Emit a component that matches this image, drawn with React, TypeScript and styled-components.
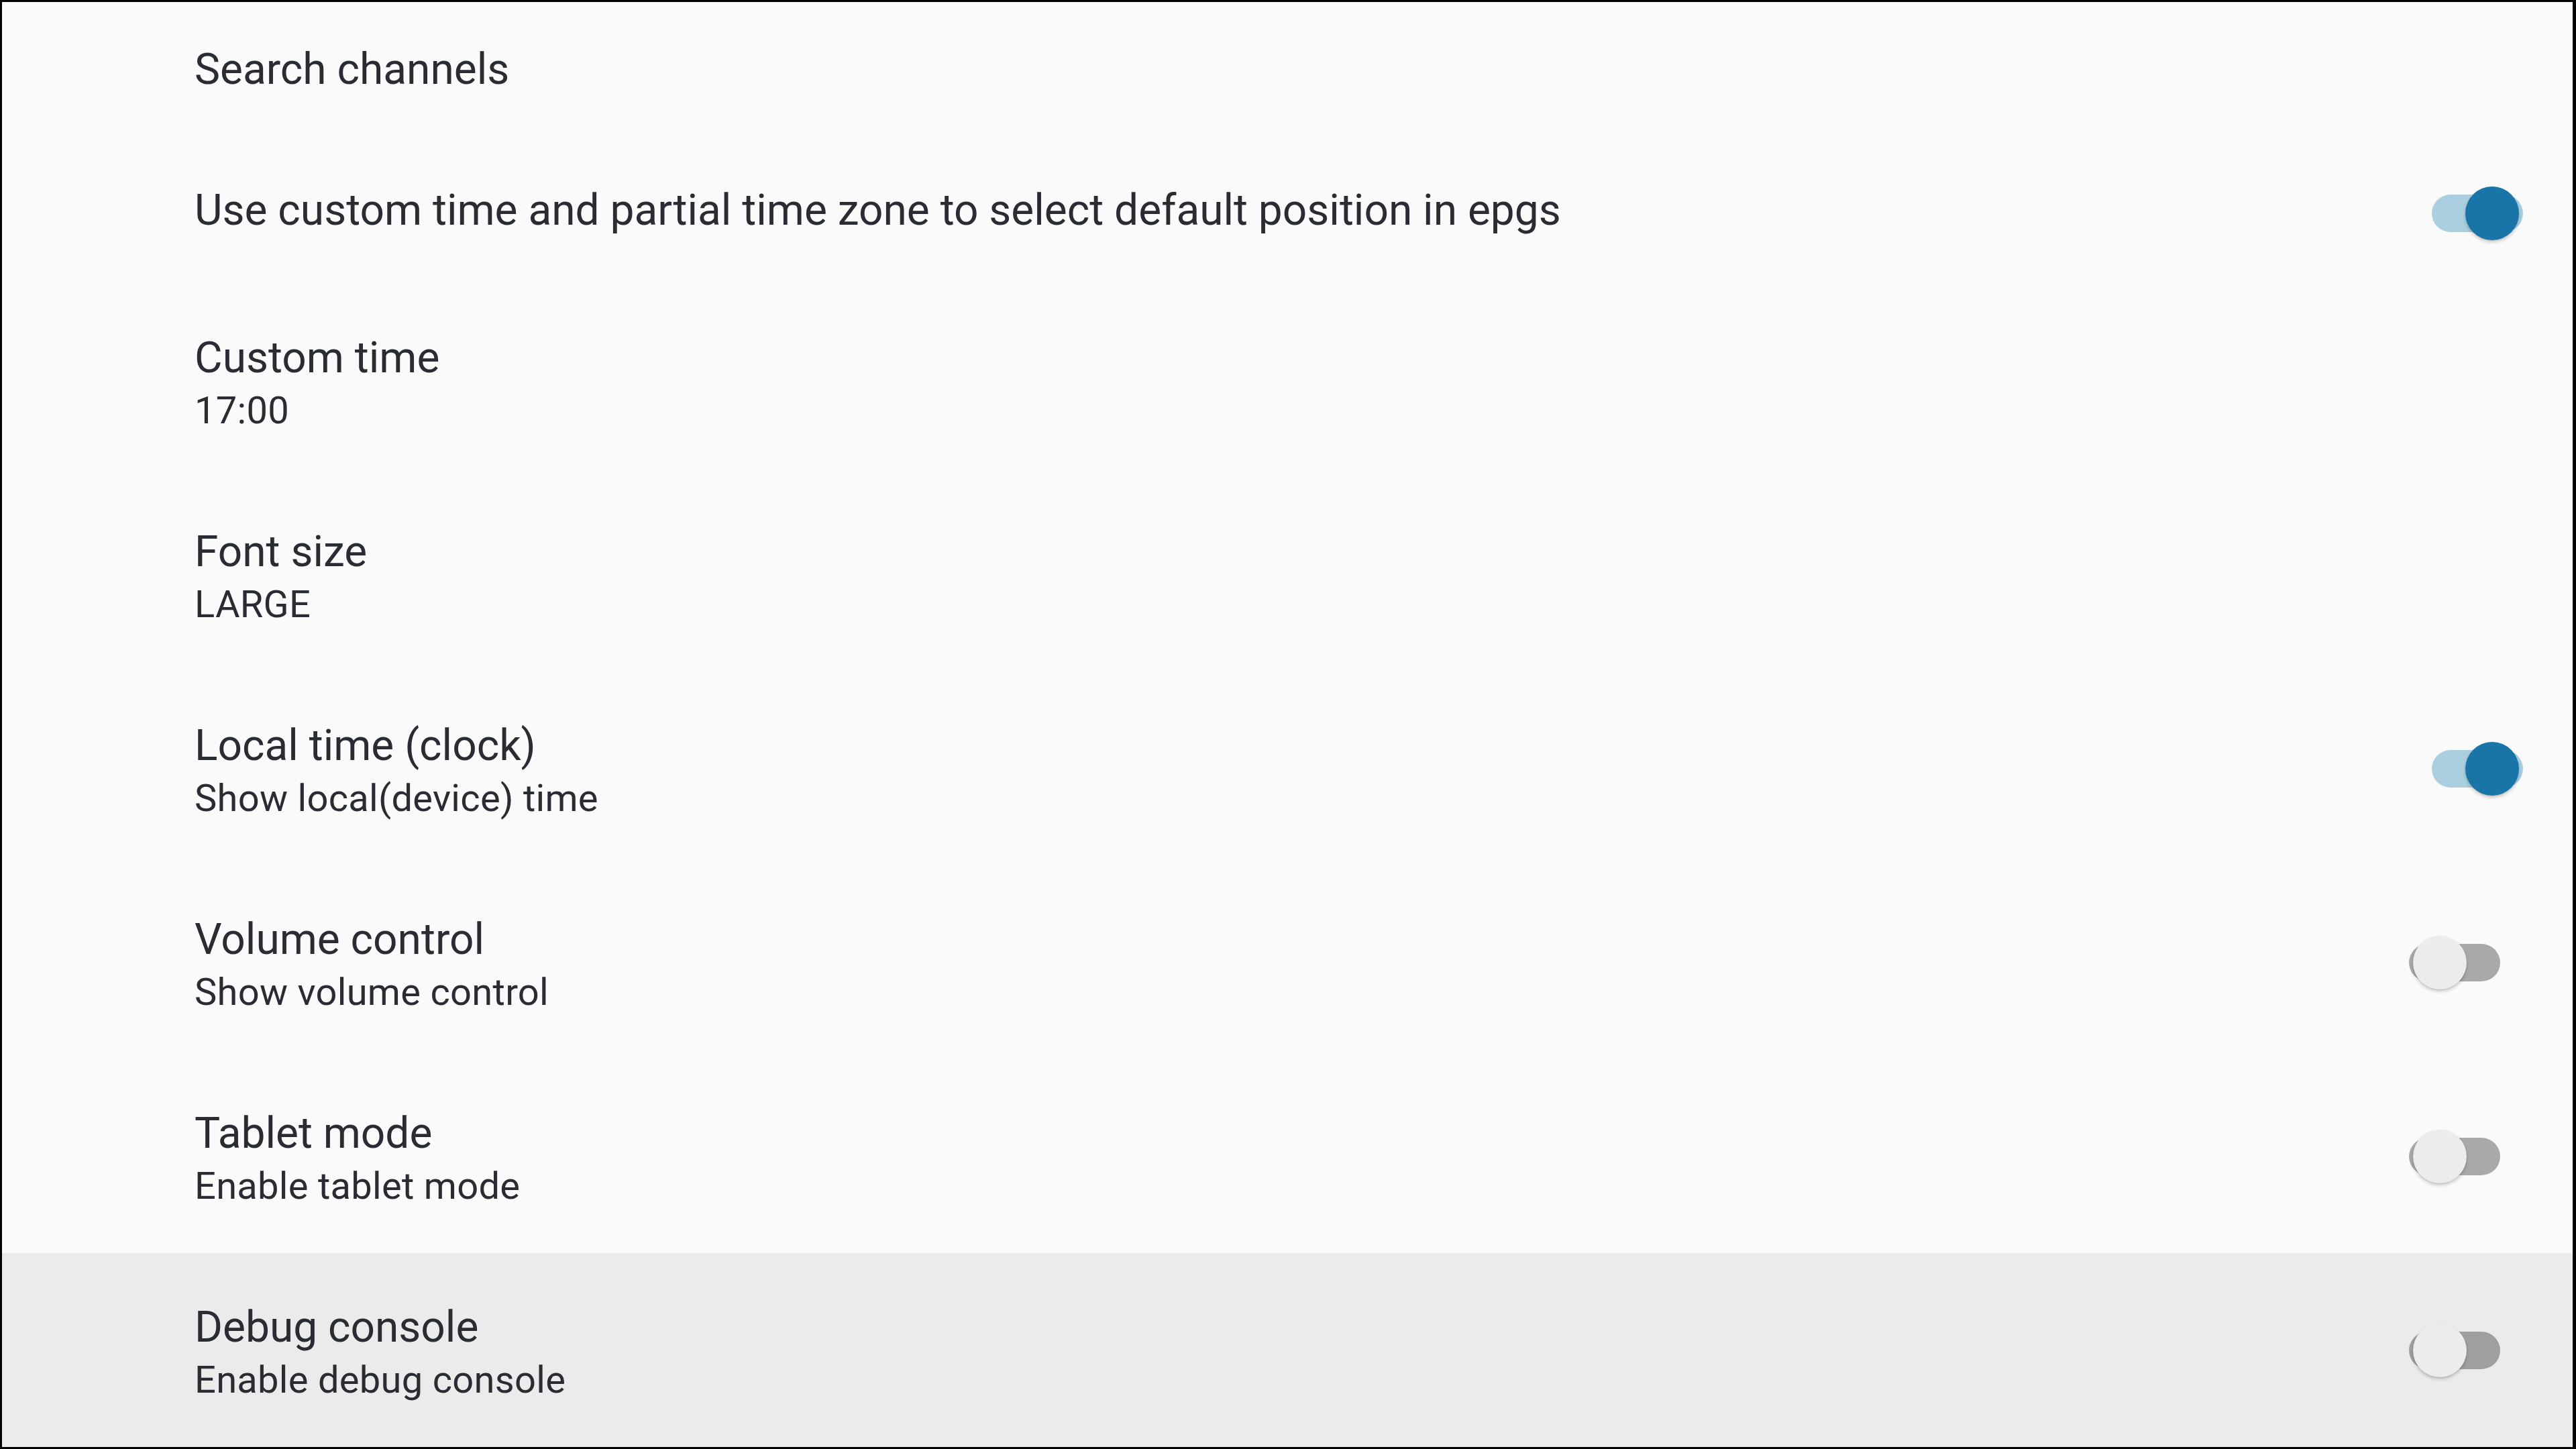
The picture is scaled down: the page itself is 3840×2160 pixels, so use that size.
import React from "react";
import styled, { createGlobalStyle } from "styled-components";

const Global = createGlobalStyle`
  html, body { margin: 0; padding: 0; background: #000; }
  body { font-family: Roboto, "Noto Sans", sans-serif; }
`;

const Frame = styled.div`
  box-sizing: border-box;
  width: 3840px;
  height: 2160px;
  border-style: solid;
  border-color: #000;
  border-width: 3px 5px 3px 3px;
  background: #fafafa;
  display: flex;
  flex-direction: column;
  overflow: hidden;
`;

const Row = styled.div<{ $tall?: boolean; $focused?: boolean }>`
  flex: none;
  height: ${(p) => (p.$tall ? 289 : 210)}px;
  display: flex;
  align-items: center;
  padding-left: 287px;
  background: ${(p) => (p.$focused ? "#ebebeb" : "transparent")};
`;

const Texts = styled.div<{ $tall?: boolean }>`
  flex: 1;
  display: flex;
  flex-direction: column;
  gap: 8px;
  color: #2a2c33;
  padding-top: ${(p) => (p.$tall ? 6 : 0)}px;
  padding-bottom: ${(p) => (p.$tall ? 0 : 10)}px;
`;

const Title = styled.div`
  font-size: 64px;
  line-height: 75px;
`;

const Summary = styled.div`
  font-size: 56px;
  line-height: 66px;
  letter-spacing: 0.3px;
`;

const SwitchBox = styled.div<{ $on: boolean }>`
  flex: none;
  position: relative;
  width: 136px;
  height: 80px;
  margin-right: ${(p) => (p.$on ? 74 : 108)}px;
  display: flex;
  align-items: center;
`;

const Track = styled.div<{ $on: boolean }>`
  width: 136px;
  height: 56px;
  border-radius: 28px;
  background: ${(p) => (p.$on ? "#a9cfe0" : "rgba(0,0,0,0.32)")};
`;

const Thumb = styled.div<{ $on: boolean }>`
  position: absolute;
  top: 0;
  left: ${(p) => (p.$on ? 50 : 6)}px;
  width: 80px;
  height: 80px;
  border-radius: 50%;
  background: ${(p) => (p.$on ? "#1975a8" : "#ececec")};
  box-shadow: 0 3px 5px rgba(0, 0, 0, 0.2), 0 1px 1px rgba(0, 0, 0, 0.08);
`;

function Toggle({ on }: { on: boolean }) {
  return (
    <SwitchBox $on={on}>
      <Track $on={on} />
      <Thumb $on={on} />
    </SwitchBox>
  );
}

type Item = {
  title: string;
  summary?: string;
  toggle?: boolean;
  focused?: boolean;
};

const items: Item[] = [
  { title: "Search channels" },
  {
    title:
      "Use custom time and partial time zone to select default position in epgs",
    toggle: true,
  },
  { title: "Custom time", summary: "17:00" },
  { title: "Font size", summary: "LARGE" },
  { title: "Local time (clock)", summary: "Show local(device) time", toggle: true },
  { title: "Volume control", summary: "Show volume control", toggle: false },
  { title: "Tablet mode", summary: "Enable tablet mode", toggle: false },
  {
    title: "Debug console",
    summary: "Enable debug console",
    toggle: false,
    focused: true,
  },
];

export default function App() {
  return (
    <>
      <Global />
      <Frame>
        {items.map((it) => (
          <Row key={it.title} $tall={!!it.summary} $focused={it.focused}>
            <Texts $tall={!!it.summary}>
              <Title>{it.title}</Title>
              {it.summary && <Summary>{it.summary}</Summary>}
            </Texts>
            {it.toggle !== undefined && <Toggle on={it.toggle} />}
          </Row>
        ))}
      </Frame>
    </>
  );
}
